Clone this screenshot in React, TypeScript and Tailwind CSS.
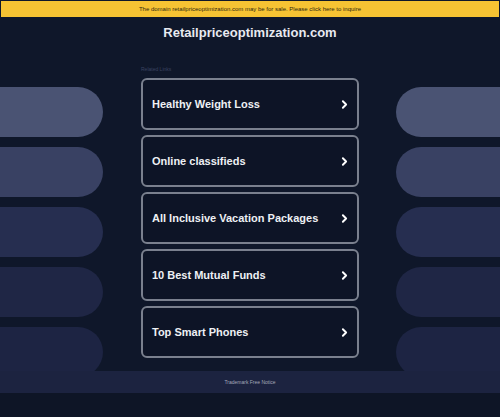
import { ChevronRight } from 'lucide-react';

const links = [
  'Healthy Weight Loss',
  'Online classifieds',
  'All Inclusive Vacation Packages',
  '10 Best Mutual Funds',
  'Top Smart Phones',
];

const pillColors = ['bg-[#4a5373]', 'bg-[#394163]', 'bg-[#262e50]', 'bg-[#1f2645]', 'bg-[#1d2443]'];

function SidePills({ side }: { side: 'left' | 'right' }) {
  return (
    <div className="flex flex-col gap-[10px] pt-[46px]">
      {pillColors.map((c, i) => (
        <div
          key={i}
          className={`h-[50px] shrink-0 ${c} ${side === 'left' ? 'rounded-r-full' : 'rounded-l-full'}`}
        />
      ))}
    </div>
  );
}

export default function App() {
  return (
    <div
      className="w-[500px] h-[417px] bg-[#0f172a] flex flex-col overflow-hidden"
      style={{ fontFamily: '"Liberation Sans", Arial, sans-serif' }}
    >
      {/* баннер о продаже */}
      <div className="mx-px mt-px h-[16px] bg-[#f6c333] flex items-center justify-center">
        <span className="text-[6px] text-[#2f2a10] leading-none">
          The domain retailpriceoptimization.com may be for sale. Please click here to inquire
        </span>
      </div>

      <div className="pt-[8px] text-center text-[13px] leading-[16px] font-bold text-[#e8eaf0]">
        Retailpriceoptimization.com
      </div>

      {/* основная часть */}
      <div className="h-[330px] flex overflow-hidden">
        <div className="w-[103px]">
          <SidePills side="left" />
        </div>

        <div className="ml-[38px] w-[218px] pt-[23px]">
          <div className="text-[5px] leading-[10px] text-[#3a4360] mb-[4px]">Related Links</div>
          <div className="flex flex-col gap-[5px]">
            {links.map((t) => (
              <div
                key={t}
                className="h-[52px] rounded-[6px] border-2 border-[#7a808e] bg-[#0d1426] flex items-center justify-between pl-[9px] pr-[6px]"
              >
                <span className="text-[11px] font-bold text-[#eef0f4]">{t}</span>
                <ChevronRight className="w-[13px] h-[13px] text-white" strokeWidth={3.5} />
              </div>
            ))}
          </div>
        </div>

        <div className="ml-auto w-[104px]">
          <SidePills side="right" />
        </div>
      </div>

      {/* подвал */}
      <div className="h-[22px] bg-[#1c2340] flex items-center justify-center">
        <span className="text-[5px] text-[#a3a8b8] leading-none">Trademark Free Notice</span>
      </div>
      <div className="flex-1 bg-[#0e1526]" />
    </div>
  );
}
